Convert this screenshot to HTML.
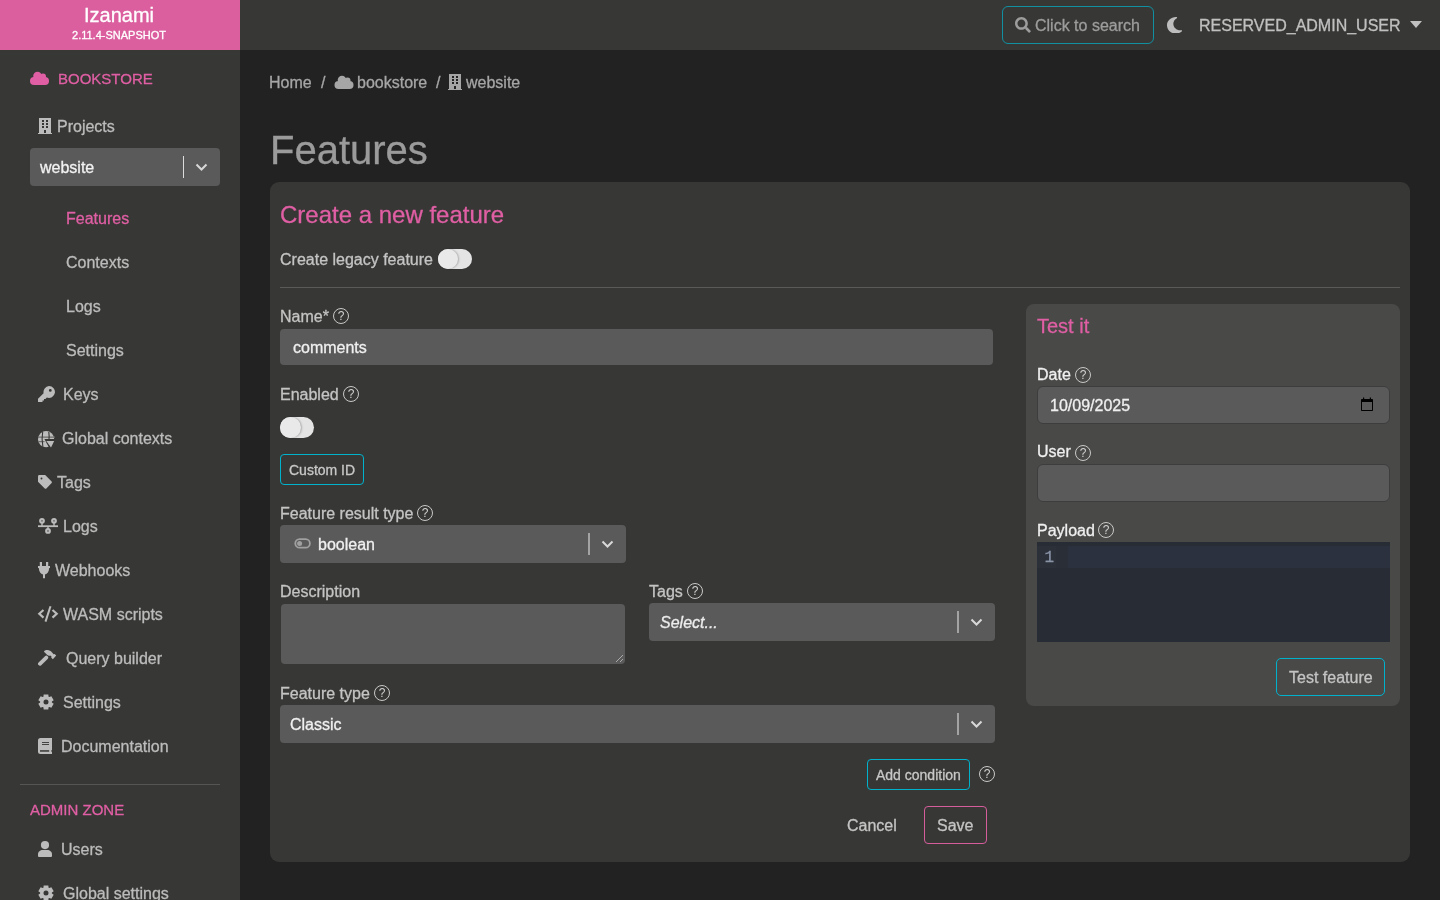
<!DOCTYPE html>
<html><head><meta charset="utf-8">
<style>
*{box-sizing:border-box;margin:0;padding:0}
html,body{width:1440px;height:900px;overflow:hidden;background:#222222;font-family:"Liberation Sans",sans-serif;font-size:16px;color:#bdbdbd}
.a{position:absolute;white-space:nowrap;line-height:1;-webkit-text-stroke:0.3px currentColor}
svg{position:absolute;display:block}
#side{position:absolute;left:0;top:0;width:240px;height:900px;background:#373735}
#brand{position:absolute;left:0;top:0;width:240px;height:50px;background:#db5f9f}
#top{position:absolute;left:240px;top:0;width:1200px;height:50px;background:#373735}
.pink{color:#e05fa4}
.nav{color:#bcbcbc}
.box{position:absolute;background:#5a5a5a;border-radius:4px}
.sep{position:absolute;width:1px;background:#c8c8c8}
.btn{position:absolute;border:1px solid #00b2cc;border-radius:4px}
.help{position:absolute;width:16px;height:16px;border:1px solid #c9c9c9;border-radius:50%;font-size:12px;line-height:14px;text-align:center;color:#d0d0d0}
.lbl{color:#c4c4c4}
</style></head>
<body>
<div id="root" style="position:absolute;left:0;top:0;width:1440px;height:900px;will-change:transform">
<div id="side">
  <div id="brand"></div>
</div>
<div id="top"></div>

<!-- brand text -->
<div class="a" style="left:-1px;width:240px;text-align:center;top:5px;font-size:20px;color:#fff">Izanami</div>
<div class="a" style="left:-1px;width:240px;text-align:center;top:29.5px;font-size:11px;color:#fff">2.11.4-SNAPSHOT</div>

<!-- BOOKSTORE -->
<svg style="left:30px;top:71px" width="19" height="14" viewBox="0 0 19 14"><g fill="#e05fa4"><circle cx="4" cy="10" r="4"/><circle cx="7.5" cy="5" r="4.3"/><circle cx="13" cy="5.6" r="3"/><circle cx="15" cy="10" r="4"/><rect x="4" y="7" width="11" height="7"/></g></svg>
<div class="a pink" style="left:58px;top:71.3px;font-size:15px">BOOKSTORE</div>

<!-- Projects -->
<svg style="left:38px;top:118px" width="14" height="16" viewBox="0 0 14 16"><path fill="#bcbcbc" fill-rule="evenodd" d="M1 0h12v15h1v1H0v-1h1zM4 2v2h2V2zm4 0v2h2V2zM4 5v2h2V5zm4 0v2h2V5zM4 8v2h2V8zm4 0v2h2V8zM6 12v3h2v-3z"/></svg>
<div class="a nav" style="left:57px;top:118.5px">Projects</div>

<!-- project select -->
<div class="box" style="left:30px;top:148px;width:190px;height:38px"></div>
<div class="a" style="left:40px;top:159.5px;color:#f2f2f2">website</div>
<div class="sep" style="left:183px;top:156px;height:22px;background:#dcdcdc"></div>
<svg style="left:195px;top:163px" width="13" height="9" viewBox="0 0 13 9"><path d="M1.5 1.5l5 5 5-5" fill="none" stroke="#d8d8d8" stroke-width="2"/></svg>

<!-- sub nav -->
<div class="a pink" style="left:66px;top:210.5px">Features</div>
<div class="a nav" style="left:66px;top:254.5px">Contexts</div>
<div class="a nav" style="left:66px;top:298.5px">Logs</div>
<div class="a nav" style="left:66px;top:342.5px">Settings</div>

<!-- main nav -->
<svg style="left:38px;top:386px" width="17" height="16" viewBox="0 0 17 16"><path fill="#bcbcbc" d="M11 0a6 6 0 1 1-2.2 11.6L7.5 13H6v1.5H4.5V16H0v-3.2l5.6-5.6A6 6 0 0 1 11 0zm1.3 3a1.4 1.4 0 1 0 0 2.8 1.4 1.4 0 0 0 0-2.8z"/></svg>
<div class="a nav" style="left:63px;top:386.5px">Keys</div>

<svg style="left:38px;top:431px" width="17" height="17" viewBox="0 0 17 17"><circle cx="8.1" cy="8.2" r="8.1" fill="#bcbcbc"/><path d="M0 6.1H17M0 10.6H6.5" stroke="#6e6e6c" stroke-width="1.3"/><path d="M4.7 .5C3.9 5 3.9 11 4.9 16M10.8 .8C11.2 3.5 11.2 6 11 8.7" stroke="#373735" stroke-width="1.1" fill="none"/><path fill="#373735" d="M6.4 8.1H17V17H11.2z"/><path fill="#bcbcbc" d="M8.3 9.9H16.2L13 16.6z"/></svg>
<div class="a nav" style="left:62px;top:430.5px">Global contexts</div>

<svg style="left:38px;top:475px" width="15" height="14" viewBox="0 0 15 14"><path fill="#bcbcbc" fill-rule="evenodd" d="M0 1.4A1.4 1.4 0 0 1 1.4 0H7.2L13.4 6.2A1.5 1.5 0 0 1 13.4 8.3L8.6 13.2A1.5 1.5 0 0 1 6.5 13.2L0 6.7zM3.5 2.5a.95.95 0 1 0 0 1.9.95.95 0 0 0 0-1.9z"/></svg>
<div class="a nav" style="left:57px;top:474.5px">Tags</div>

<svg style="left:38px;top:517px" width="21" height="17" viewBox="0 0 21 17"><g fill="#bcbcbc"><rect x="0" y="8.3" width="20" height="1.8"/><rect x="3.3" y="5" width="1.4" height="4"/><rect x="15.3" y="5" width="1.4" height="4"/><rect x="9.3" y="9" width="1.4" height="3"/></g><g fill="#6a6a68" stroke="#bcbcbc" stroke-width="2"><circle cx="4" cy="3.8" r="1.9"/><circle cx="16" cy="3.8" r="1.9"/><circle cx="10" cy="13.9" r="1.9"/></g></svg>
<div class="a nav" style="left:63px;top:518.5px">Logs</div>

<svg style="left:38px;top:562px" width="12" height="17" viewBox="0 0 12 17"><path fill="#bcbcbc" d="M1.8 0h2.2v4H1.8zM8 0h2.2v4H8zM0 4h12v2h-.8C11 9.5 9.3 12 7 12.6V16.3H5V12.6C2.7 12 1 9.5.8 6H0z"/></svg>
<div class="a nav" style="left:55px;top:562.5px">Webhooks</div>

<svg style="left:37px;top:605px" width="22" height="18" viewBox="0 0 22 18"><path d="M6.5 5L2.3 8.8l4.2 3.8M15.5 5l4.2 3.8-4.2 3.8" fill="none" stroke="#bcbcbc" stroke-width="2.2"/><path d="M13.5 1.3L8.5 16.6" fill="none" stroke="#bcbcbc" stroke-width="2"/></svg>
<div class="a nav" style="left:63px;top:606.5px">WASM scripts</div>

<svg style="left:38px;top:649px" width="19" height="18" viewBox="0 0 19 18"><path d="M1.9 14.8L8.3 8.6" stroke="#bcbcbc" stroke-width="3.8" stroke-linecap="round"/><path fill="#bcbcbc" d="M5.9 2.3C8 .3 12 .3 14.3 3.8L15.6 5.2 16.6 5 18.2 6.6 14.9 10.3 13.2 8.6 13.5 7.6 12.3 6.5C11 7 10 6.6 9.3 5.9L6.5 3.2z"/></svg>
<div class="a nav" style="left:66px;top:650.5px">Query builder</div>

<svg style="left:38px;top:694px" width="16" height="16" viewBox="0 0 16 16"><path fill="#bcbcbc" fill-rule="evenodd" d="M5.43 2.69 L5.67 0.45 L10.33 0.45 L10.57 2.69 L11.32 3.12 L13.37 2.20 L15.70 6.25 L13.88 7.57 L13.88 8.43 L15.70 9.75 L13.37 13.80 L11.32 12.88 L10.57 13.31 L10.33 15.55 L5.67 15.55 L5.43 13.31 L4.68 12.88 L2.63 13.80 L0.30 9.75 L2.12 8.43 L2.12 7.57 L0.30 6.25 L2.63 2.20 L4.68 3.12z M8 5.5a2.5 2.5 0 1 0 0 5 2.5 2.5 0 0 0 0-5z"/></svg>
<div class="a nav" style="left:63px;top:694.5px">Settings</div>

<svg style="left:38px;top:738px" width="14" height="16" viewBox="0 0 14 16"><path fill="#bcbcbc" d="M2.5 0H14V16H2.5A2.5 2.5 0 0 1 0 13.5V2.5A2.5 2.5 0 0 1 2.5 0z"/><g fill="#373735"><rect x="2" y="12.2" width="9.2" height="1.5"/><rect x="13.3" y="12.2" width="0.7" height="1.5"/><rect x="4" y="4" width="7" height="0.9"/><rect x="4" y="6" width="7" height="0.9"/></g></svg>
<div class="a nav" style="left:61px;top:738.5px">Documentation</div>

<div style="position:absolute;left:20px;top:784px;width:200px;height:1px;background:#555553"></div>
<div class="a pink" style="left:30px;top:802.3px;font-size:15px">ADMIN ZONE</div>

<svg style="left:38px;top:841px" width="14" height="16" viewBox="0 0 14 16"><circle cx="7" cy="4.1" r="4.1" fill="#bcbcbc"/><path fill="#bcbcbc" d="M0 13.2C0 10.6 2.3 8.9 4.6 8.9H9.4C11.7 8.9 14 10.6 14 13.2V15A1 1 0 0 1 13 16H1A1 1 0 0 1 0 15z"/></svg>
<div class="a nav" style="left:61px;top:841.5px">Users</div>

<svg style="left:38px;top:885px" width="16" height="16" viewBox="0 0 16 16"><path fill="#bcbcbc" fill-rule="evenodd" d="M5.43 2.69 L5.67 0.45 L10.33 0.45 L10.57 2.69 L11.32 3.12 L13.37 2.20 L15.70 6.25 L13.88 7.57 L13.88 8.43 L15.70 9.75 L13.37 13.80 L11.32 12.88 L10.57 13.31 L10.33 15.55 L5.67 15.55 L5.43 13.31 L4.68 12.88 L2.63 13.80 L0.30 9.75 L2.12 8.43 L2.12 7.57 L0.30 6.25 L2.63 2.20 L4.68 3.12z M8 5.5a2.5 2.5 0 1 0 0 5 2.5 2.5 0 0 0 0-5z"/></svg>
<div class="a nav" style="left:63px;top:885.5px">Global settings</div>

<!-- top bar -->
<div class="btn" style="left:1002px;top:6px;width:152px;height:38px;border-color:#1190a2;border-radius:6px"></div>
<svg style="left:1015px;top:17.3px" width="15.8" height="15.8" viewBox="0 0 512 512"><path fill="#9d9d9d" d="M505 442.7L405.3 343c-4.5-4.5-10.6-7-17-7H372c27.6-35.3 44-79.7 44-128C416 93.1 322.9 0 208 0S0 93.1 0 208s93.1 208 208 208c48.3 0 92.7-16.4 128-44v16.3c0 6.4 2.5 12.5 7 17l99.7 99.7c9.4 9.4 24.6 9.4 33.9 0l28.3-28.3c9.4-9.4 9.4-24.6.1-34zM208 336c-70.7 0-128-57.2-128-128 0-70.7 57.2-128 128-128 70.7 0 128 57.2 128 128 0 70.7-57.2 128-128 128z"/></svg>
<div class="a" style="left:1035px;top:17.5px;color:#9d9d9d">Click to search</div>
<svg style="left:1167.2px;top:16.7px" width="15.2" height="16.6" viewBox="0 32 384 448" preserveAspectRatio="none"><path fill="#bdbdbd" d="M223.5 32C100 32 0 132.3 0 256S100 480 223.5 480c60.6 0 115.5-24.2 155.8-63.4c5-4.9 6.3-12.5 3.1-18.7s-10.1-9.7-17-8.5c-9.8 1.7-19.8 2.6-30.1 2.6c-96.9 0-175.5-78.8-175.5-176c0-65.8 36-123.1 89.3-153.3c6.1-3.5 9.2-10.5 7.7-17.3s-7.3-11.900-14.300-12.500c-6.300-.5-12.600-.8-19-.8z"/></svg>
<div class="a" style="left:1199px;top:17.7px;color:#c0c0c0">RESERVED_ADMIN_USER</div>
<svg style="left:1410px;top:21px" width="12" height="8" viewBox="0 0 12 8"><path fill="#c0c0c0" d="M0 0h12L6 7z"/></svg>

<!-- breadcrumb -->
<div class="a" style="left:269px;top:74.5px;color:#a6a6a6">Home</div>
<div class="a" style="left:321px;top:74.5px;color:#a6a6a6">/</div>
<svg style="left:333.5px;top:75.2px" width="20" height="14" viewBox="0 0 19 14"><g fill="#a6a6a6"><circle cx="4" cy="10" r="4"/><circle cx="7.5" cy="5" r="4.3"/><circle cx="13" cy="5.6" r="3"/><circle cx="15" cy="10" r="4"/><rect x="4" y="7" width="11" height="7"/></g></svg>
<div class="a" style="left:357px;top:74.5px;color:#a6a6a6">bookstore</div>
<div class="a" style="left:436px;top:74.5px;color:#a6a6a6">/</div>
<svg style="left:448px;top:74px" width="14" height="16" viewBox="0 0 14 16"><path fill="#a6a6a6" fill-rule="evenodd" d="M1 0h12v15h1v1H0v-1h1zM4 2v2h2V2zm4 0v2h2V2zM4 5v2h2V5zm4 0v2h2V5zM4 8v2h2V8zm4 0v2h2V8zM6 12v3h2v-3z"/></svg>
<div class="a" style="left:466px;top:74.5px;color:#a6a6a6">website</div>

<!-- title -->
<div class="a" style="left:270px;top:130px;font-size:40px;color:#9b9b9b">Features</div>

<!-- card -->
<div style="position:absolute;left:270px;top:182px;width:1140px;height:680px;background:#373735;border-radius:9px"></div>
<div class="a pink" style="left:280px;top:202.7px;font-size:24px">Create a new feature</div>
<div class="a lbl" style="left:280px;top:252.2px">Create legacy feature</div>
<div style="position:absolute;left:438px;top:249px;width:34px;height:20px;border-radius:10px;background:#e4e4e4"></div>
<div style="position:absolute;left:438px;top:249px;width:20px;height:20px;border-radius:10px;background:#e9e9e9;box-shadow:1px 0 2px rgba(0,0,0,.25)"></div>
<div style="position:absolute;left:280px;top:287px;width:1120px;height:1px;background:#5a5a58"></div>

<!-- Name -->
<div class="a lbl" style="left:280px;top:309.2px">Name*</div>
<div class="help" style="left:333px;top:308px">?</div>
<div class="box" style="left:280px;top:329px;width:713px;height:36px"></div>
<div class="a" style="left:293px;top:339.5px;color:#f0f0f0">comments</div>

<!-- Enabled -->
<div class="a lbl" style="left:280px;top:386.5px">Enabled</div>
<div class="help" style="left:343px;top:386px">?</div>
<div style="position:absolute;left:280px;top:417px;width:34px;height:21px;border-radius:10.5px;background:#e4e4e4"></div>
<div style="position:absolute;left:280px;top:417px;width:21px;height:21px;border-radius:10.5px;background:#e9e9e9;box-shadow:1px 0 2px rgba(0,0,0,.25)"></div>

<!-- Custom ID -->
<div class="btn" style="left:280px;top:454px;width:84px;height:31px;border-radius:4px"></div>
<div class="a" style="left:289px;top:463px;font-size:14px;color:#c8c8c8">Custom ID</div>

<!-- Feature result type -->
<div class="a lbl" style="left:280px;top:505.5px">Feature result type</div>
<div class="help" style="left:417px;top:505px">?</div>
<div class="box" style="left:280px;top:525px;width:346px;height:38px"></div>
<svg style="left:293.5px;top:538px" width="17" height="11" viewBox="0 0 17 11"><rect x="1.3" y="1.1" width="14.6" height="8.6" rx="4.3" fill="none" stroke="#a0a0a0" stroke-width="1.8"/><circle cx="5.6" cy="5.4" r="2.5" fill="#a0a0a0"/></svg>
<div class="a" style="left:318px;top:537px;color:#f0f0f0">boolean</div>
<div class="sep" style="left:588px;top:533px;height:22px;width:2px;background:#a3a3a3"></div>
<svg style="left:601px;top:540px" width="13" height="9" viewBox="0 0 13 9"><path d="M1.5 1.5l5 5 5-5" fill="none" stroke="#d8d8d8" stroke-width="2"/></svg>

<!-- Description -->
<div class="a lbl" style="left:280px;top:584px">Description</div>
<div class="box" style="left:281px;top:604px;width:344px;height:60px"></div>
<svg style="left:614px;top:653px" width="10" height="10" viewBox="0 0 10 10"><path d="M9 2L2 9M9 6L6 9" stroke="#aaa" stroke-width="1"/></svg>

<!-- Tags -->
<div class="a lbl" style="left:649px;top:584px">Tags</div>
<div class="help" style="left:687px;top:583px">?</div>
<div class="box" style="left:649px;top:603px;width:346px;height:38px"></div>
<div class="a" style="left:660px;top:615px;font-style:italic;color:#ececec">Select...</div>
<div class="sep" style="left:957px;top:611px;height:22px;width:2px;background:#a3a3a3"></div>
<svg style="left:970px;top:618px" width="13" height="9" viewBox="0 0 13 9"><path d="M1.5 1.5l5 5 5-5" fill="none" stroke="#d8d8d8" stroke-width="2"/></svg>

<!-- Feature type -->
<div class="a lbl" style="left:280px;top:686px">Feature type</div>
<div class="help" style="left:374px;top:685px">?</div>
<div class="box" style="left:280px;top:705px;width:715px;height:38px"></div>
<div class="a" style="left:290px;top:717px;color:#f0f0f0">Classic</div>
<div class="sep" style="left:957px;top:713px;height:22px;width:2px;background:#a3a3a3"></div>
<svg style="left:970px;top:720px" width="13" height="9" viewBox="0 0 13 9"><path d="M1.5 1.5l5 5 5-5" fill="none" stroke="#d8d8d8" stroke-width="2"/></svg>

<!-- Add condition -->
<div class="btn" style="left:867px;top:759px;width:103px;height:31px;border-radius:4px"></div>
<div class="a" style="left:876px;top:768px;font-size:14px;color:#c8c8c8">Add condition</div>
<div class="help" style="left:979px;top:766px">?</div>

<!-- Cancel / Save -->
<div class="a" style="left:847px;top:817.5px;color:#c4c4c4">Cancel</div>
<div class="btn" style="left:924px;top:806px;width:63px;height:38px;border-color:#d65d9c"></div>
<div class="a" style="left:937px;top:817.5px;color:#c4c4c4">Save</div>

<!-- Test it panel -->
<div style="position:absolute;left:1026px;top:304px;width:374px;height:402px;background:#494948;border-radius:8px"></div>
<div class="a pink" style="left:1037px;top:315.7px;font-size:20px">Test it</div>

<div class="a" style="left:1037px;top:366.5px;color:#efefef">Date</div>
<div class="help" style="left:1075px;top:367px">?</div>
<div class="box" style="left:1037px;top:386px;width:353px;height:38px;border:1px solid #3d3d3d;border-radius:6px"></div>
<div class="a" style="left:1050px;top:398px;color:#efefef">10/09/2025</div>
<svg style="left:1361px;top:397px" width="12" height="14" viewBox="0 0 12 14"><path fill="#000" fill-rule="evenodd" d="M2 .5h1.2V2h5.6V.5H10V2h1.2a.8.8 0 0 1 .8.8V13.2a.8.8 0 0 1-.8.8H.8a.8.8 0 0 1-.8-.8V2.8A.8.8 0 0 1 .8 2H2zM1 5v8h10V5z"/></svg>

<div class="a" style="left:1037px;top:444px;color:#efefef">User</div>
<div class="help" style="left:1075px;top:445px">?</div>
<div class="box" style="left:1037px;top:464px;width:353px;height:38px;border:1px solid #3d3d3d;border-radius:6px"></div>

<div class="a" style="left:1037px;top:522.5px;color:#efefef">Payload</div>
<div class="help" style="left:1098px;top:522px">?</div>
<div style="position:absolute;left:1037px;top:542px;width:353px;height:100px;background:#282c34"></div>
<div style="position:absolute;left:1037px;top:546px;width:19px;height:22px;background:#2c3039"></div>
<div style="position:absolute;left:1056px;top:546px;width:12px;height:22px;background:#2a2e36"></div>
<div style="position:absolute;left:1068px;top:546px;width:322px;height:22px;background:#2b313e"></div>
<div class="a" style="left:1044.5px;top:550.3px;font-family:'Liberation Mono',monospace;font-size:16px;color:#8a94a8">1</div>

<div class="btn" style="left:1276px;top:658px;width:109px;height:38px;border-radius:5px"></div>
<div class="a" style="left:1289px;top:669.5px;color:#c4c4c4">Test feature</div>

</div>
</body></html>
